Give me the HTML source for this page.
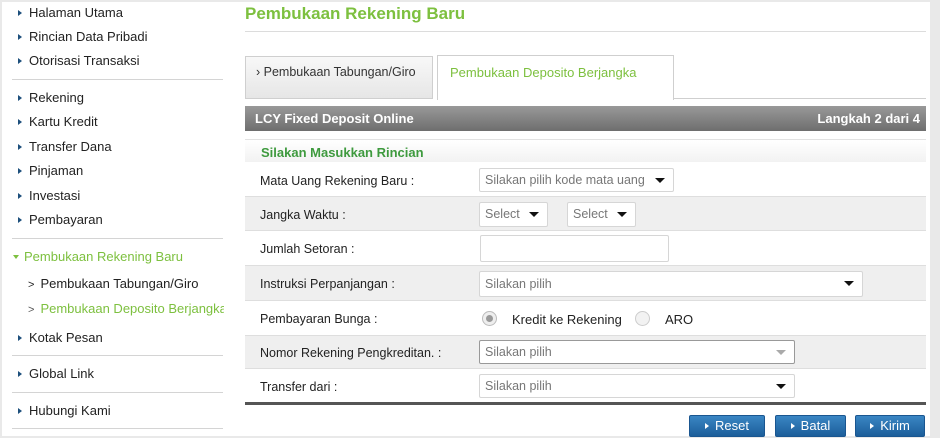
<!DOCTYPE html>
<html><head><meta charset="utf-8"><style>
*{margin:0;padding:0;box-sizing:border-box}
body{width:940px;height:438px;overflow:hidden;background:#e9e9e9;font-family:"Liberation Sans",Arial,sans-serif;position:relative}
.page{position:absolute;left:2px;top:2px;width:928px;height:434px;background:#fff}
.a{position:absolute}
.nav{font-size:13px;color:#222;white-space:nowrap}
.nav .tri{display:inline-block;width:0;height:0;border-left:4px solid #1d4f7c;border-top:3.5px solid transparent;border-bottom:3.5px solid transparent;margin-right:7px;vertical-align:1px}
.sep{position:absolute;left:12px;width:211px;height:1px;background:#d4d4d4}
.lbl{font-size:12.5px;color:#222;position:absolute;left:260px}
.row{position:absolute;left:245px;width:681px}
.g{background:#efefef;border-top:1px solid #dedede;border-bottom:1px solid #dedede}
.sel{position:absolute;background:#fff;border:1px solid #d6d6d6;border-radius:2px;font-size:12.5px;color:#777;padding-left:5px;line-height:22px;white-space:nowrap}
.sel .dd{position:absolute;right:8px;top:9px;width:0;height:0;border-left:5px solid transparent;border-right:5px solid transparent;border-top:5px solid #111}
.btn{position:absolute;top:415px;height:22px;background:linear-gradient(#3a86c4,#1c5e9a);border:1px solid #1a5690;border-radius:2px;color:#fff;font-size:13px;line-height:20px;text-align:center}
.btn:before{content:"";display:inline-block;border-left:4px solid #fff;border-top:3px solid transparent;border-bottom:3px solid transparent;margin-right:6px;vertical-align:1px}
</style></head><body>
<div class="page"></div>
<div class="a nav" style="left:18px;top:5px"><span class="tri"></span>Halaman Utama</div>
<div class="a nav" style="left:18px;top:29px"><span class="tri"></span>Rincian Data Pribadi</div>
<div class="a nav" style="left:18px;top:53px"><span class="tri"></span>Otorisasi Transaksi</div>
<div class="sep" style="top:79px"></div>
<div class="a nav" style="left:18px;top:90px"><span class="tri"></span>Rekening</div>
<div class="a nav" style="left:18px;top:114px"><span class="tri"></span>Kartu Kredit</div>
<div class="a nav" style="left:18px;top:139px"><span class="tri"></span>Transfer Dana</div>
<div class="a nav" style="left:18px;top:163px"><span class="tri"></span>Pinjaman</div>
<div class="a nav" style="left:18px;top:188px"><span class="tri"></span>Investasi</div>
<div class="a nav" style="left:18px;top:212px"><span class="tri"></span>Pembayaran</div>
<div class="sep" style="top:238px"></div>
<div class="a nav" style="left:13px;top:249px;color:#7dc03f"><span style="display:inline-block;border-top:4px solid #7dc03f;border-left:3.5px solid transparent;border-right:3.5px solid transparent;margin-right:5px;vertical-align:2px"></span>Pembukaan Rekening Baru</div>
<div class="a nav" style="left:28px;top:276px"><span style="margin-right:6px;font-size:11px">&gt;</span>Pembukaan Tabungan/Giro</div>
<div class="a nav" style="left:28px;top:301px;color:#7dc03f;width:196px;overflow:hidden"><span style="margin-right:6px;font-size:11px;color:#555">&gt;</span>Pembukaan Deposito Berjangka</div>
<div class="a nav" style="left:18px;top:330px"><span class="tri"></span>Kotak Pesan</div>
<div class="sep" style="top:355px"></div>
<div class="a nav" style="left:18px;top:366px"><span class="tri"></span>Global Link</div>
<div class="sep" style="top:392px"></div>
<div class="a nav" style="left:18px;top:403px"><span class="tri"></span>Hubungi Kami</div>
<div class="sep" style="top:428px"></div>
<div class="a" style="left:245px;top:4px;font-size:17px;font-weight:bold;color:#7dc03f">Pembukaan Rekening Baru</div>
<div class="a" style="left:245px;top:31px;width:681px;height:1px;background:#dcdcdc"></div>
<div class="a" style="left:245px;top:56px;width:188px;height:43px;background:linear-gradient(#f8f8f8,#e6e6e6);border:1px solid #cfcfcf;font-size:12.5px;color:#333;padding:8px 0 0 10px">› Pembukaan Tabungan/Giro</div>
<div class="a" style="left:437px;top:55px;width:237px;height:45px;background:#fff;border:1px solid #cfcfcf;border-bottom:none;font-size:13px;color:#7dc03f;padding:9px 0 0 12px">Pembukaan Deposito Berjangka</div>
<div class="a" style="left:673px;top:98px;width:253px;height:1px;background:#cfcfcf"></div>
<div class="a" style="left:245px;top:106px;width:681px;height:25px;background:linear-gradient(#999,#6e6e6e);color:#fff;font-weight:bold;font-size:13px;line-height:25px;padding:0 6px 0 10px">LCY Fixed Deposit Online<span style="float:right">Langkah 2 dari 4</span></div>
<div class="a" style="left:245px;top:139px;width:681px;height:23px;background:linear-gradient(#fff,#f2f2f2);border-top:1px solid #e2e2e2;color:#3e9a3e;font-weight:bold;font-size:13px;padding:5px 0 0 16px">Silakan Masukkan Rincian</div>
<div class="row g" style="top:196px;height:35px"></div>
<div class="row g" style="top:265px;height:36px"></div>
<div class="row g" style="top:335px;height:34px"></div>
<div class="a" style="left:245px;top:402px;width:681px;height:3px;background:#555"></div>
<div class="lbl" style="top:174px">Mata Uang Rekening Baru :</div>
<div class="lbl" style="top:208px">Jangka Waktu :</div>
<div class="lbl" style="top:242px">Jumlah Setoran :</div>
<div class="lbl" style="top:277px">Instruksi Perpanjangan :</div>
<div class="lbl" style="top:312px">Pembayaran Bunga :</div>
<div class="lbl" style="top:346px">Nomor Rekening Pengkreditan. :</div>
<div class="lbl" style="top:380px">Transfer dari :</div>
<div class="sel" style="left:479px;top:168px;width:195px;height:24px">Silakan pilih kode mata uang<span class="dd"></span></div>
<div class="sel" style="left:479px;top:202px;width:69px;height:25px">Select<span class="dd"></span></div>
<div class="sel" style="left:567px;top:202px;width:69px;height:25px">Select<span class="dd"></span></div>
<div class="sel" style="left:480px;top:235px;width:189px;height:27px"></div>
<div class="sel" style="left:479px;top:271px;width:384px;height:26px;line-height:24px">Silakan pilih<span class="dd"></span></div>
<div class="a" style="left:482px;top:311px;width:15px;height:15px;border-radius:50%;background:#eee;border:1px solid #bbb"><div style="position:absolute;left:3px;top:3px;width:7px;height:7px;border-radius:50%;background:#999"></div></div>
<div class="a" style="left:512px;top:312px;font-size:13px;color:#222">Kredit ke Rekening</div>
<div class="a" style="left:635px;top:311px;width:15px;height:15px;border-radius:50%;background:#f2f2f2;border:1px solid #ccc"></div>
<div class="a" style="left:665px;top:312px;font-size:13px;color:#222">ARO</div>
<div class="sel" style="left:479px;top:340px;width:316px;height:24px;border-color:#999">Silakan pilih<span class="dd" style="border-top-color:#aaa"></span></div>
<div class="sel" style="left:479px;top:374px;width:316px;height:24px">Silakan pilih<span class="dd"></span></div>
<div class="btn" style="left:689px;width:76px">Reset</div>
<div class="btn" style="left:775px;width:71px">Batal</div>
<div class="btn" style="left:855px;width:70px">Kirim</div>
</body></html>
